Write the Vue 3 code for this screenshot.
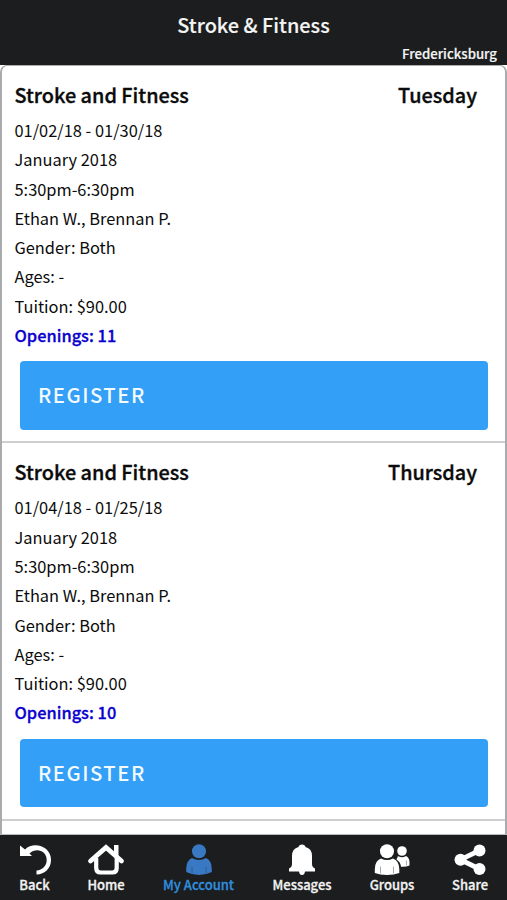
<script setup>
const classes = [
  { name: 'Stroke and Fitness', day: 'Tuesday', dates: '01/02/18 - 01/30/18', openings: 11 },
  { name: 'Stroke and Fitness', day: 'Thursday', dates: '01/04/18 - 01/25/18', openings: 10 },
]
</script>

<template>
  <div class="screen">
    <header class="top">
      <h1>Stroke &amp; Fitness</h1>
      <div class="location">Fredericksburg</div>
    </header>
    <main class="list-wrap">
      <div class="list">
        <section v-for="c in classes" :key="c.day" class="card">
          <div class="title">
            <h2>{{ c.name }}</h2>
            <h2 class="day">{{ c.day }}</h2>
          </div>
          <ul class="details">
            <li class="dates">{{ c.dates }}</li>
            <li>January 2018</li>
            <li>5:30pm-6:30pm</li>
            <li>Ethan W., Brennan P.</li>
            <li>Gender: Both</li>
            <li>Ages: -</li>
            <li>Tuition: $90.00</li>
            <li class="openings">Openings: {{ c.openings }}</li>
          </ul>
          <button class="register">REGISTER</button>
        </section>
      </div>
    </main>
    <nav class="tabs">
      <a class="tab back">
        <svg width="34" height="34" viewBox="0 0 34 34">
          <path d="M7 7.500C15.500 -1 33 4 33 18C33 26 27 32.500 18.500 32.500V28.500C24.500 28 28.700 24 28.700 18C28.700 9 18.500 5 11.500 11.500L14 14H2V3.500Z" fill="#fff" />
        </svg>
        <span>Back</span>
      </a>
      <a class="tab home">
        <svg width="38" height="34" viewBox="0 0 38 34">
          <path d="M3.500 19L19 5.500L34.500 19" fill="none" stroke="#fff" stroke-width="4.800" stroke-linecap="round" />
          <path d="M9.200 16V26Q9.200 30.500 13.500 30.500H25.500Q29.700 30.500 29.700 26V16" fill="none" stroke="#fff" stroke-width="4.200" />
          <path d="M27 3H31.500V15L27 11Z" fill="#fff" />
        </svg>
        <span>Home</span>
      </a>
      <a class="tab account">
        <svg width="34" height="34" viewBox="0 0 34 34">
          <g fill="#3978c3">
            <circle cx="17" cy="9.200" r="7" />
            <path d="M10 16Q17 20 24 16Q29.500 18 29.800 27V30Q24 33 17 33T4.200 30V27Q4.500 18 10 16Z" />
          </g>
          <path d="M10 25V31.500M24 25V31.500" stroke="#2d5a92" />
        </svg>
        <span>My Account</span>
      </a>
      <a class="tab messages">
        <svg width="34" height="34" viewBox="0 0 34 34">
          <path d="M17 2.500Q20 2.500 20.500 5Q27 6.500 27 14V22Q27 25 30 26.500V29.500H20Q19.500 33 17 33T14 29.500H4V26.500Q7 25 7 22V14Q7 6.500 13.500 5Q14 2.500 17 2.500Z" fill="#fff" />
        </svg>
        <span>Messages</span>
      </a>
      <a class="tab groups">
        <svg width="38" height="34" viewBox="0 0 38 34">
          <g fill="#fff">
            <circle cx="29" cy="9" r="4.800" />
            <path d="M25 14Q29 16.500 33 14Q36.500 15.500 36.500 20.500V23.500Q33 25 28 24.700Q27.500 20 23.500 17.500Z" />
            <circle cx="14" cy="9.300" r="7" />
            <path d="M8 16.500Q14 19.500 20 16.500Q26 18.500 26.300 27V31Q21 33 14 33T1.800 31V27Q2 18.500 8 16.500Z" />
          </g>
          <path d="M7.500 24.500V31.500M20.500 24.500V31.500M33.500 18.500V23.500" stroke="#aaa" />
        </svg>
        <span>Groups</span>
      </a>
      <a class="tab share">
        <svg width="34" height="34" viewBox="0 0 34 34">
          <path d="M26.500 8.500L7.500 17.700L26.500 27" fill="none" stroke="#fff" stroke-width="4.800" />
          <g fill="#fff">
            <circle cx="26.500" cy="8.500" r="6" />
            <circle cx="7.500" cy="17.700" r="6" />
            <circle cx="26.500" cy="27" r="6" />
          </g>
        </svg>
        <span>Share</span>
      </a>
    </nav>
  </div>
</template>

<style>
body {
  background: #1b1d1e;
}
</style>

<style scoped>
.screen {
  display: flex;
  flex-direction: column;
  height: 900px;
  overflow: hidden;
  font-family: "Noto Sans CJK SC", "Noto Sans", sans-serif;
  color: #0b0b0b;
}
.top {
  flex: none;
  height: 65px;
  background: #1b1d1e;
  color: #f4f4f4;
}
h1 {
  margin: 0;
  padding-top: 9px;
  font-size: 19.9px;
  line-height: 32px;
  font-weight: 500;
  text-align: center;
  -webkit-text-stroke: 0.15px;
}
.location {
  padding: 1px 10px 0 0;
  font-size: 13.2px;
  line-height: 24px;
  font-weight: 500;
  text-align: right;
  -webkit-text-stroke: 0.2px;
}
.list-wrap {
  flex: 1;
  min-height: 0;
  overflow: hidden;
  background: #fff;
}
.list {
  box-sizing: border-box;
  height: 800px;
  border: 1px solid #a9abac;
  border-left-width: 2px;
  border-right-width: 2px;
  border-radius: 7px;
}
.card {
  box-sizing: border-box;
  height: 377.4px;
  padding: 13px 17px 12px 12.5px;
  border-bottom: 2px solid #cfcfcf;
}
.title {
  display: flex;
  justify-content: space-between;
  padding-right: 11px;
}
h2 {
  margin: 0;
  font-size: 19.85px;
  line-height: 32px;
  font-weight: 500;
  -webkit-text-stroke: 0.35px;
}
.details {
  margin: 0;
  padding: 5px 0 0;
  list-style: none;
  font-size: 16.4px;
  line-height: 29.3px;
}
.openings {
  color: #0a00cf;
  font-weight: 500;
  -webkit-text-stroke: 0.3px;
}
.register {
  display: block;
  width: 468px;
  height: 68.5px;
  margin: 11px 0 0 5.5px;
  padding: 0 18px 3px;
  border: 0;
  border-radius: 4px;
  background: #339ff7;
  color: #f4fbff;
  font: 500 20.3px "Noto Sans CJK SC", sans-serif;
  letter-spacing: 1.5px;
  text-align: left;
}
.tabs {
  flex: none;
  display: grid;
  grid-template-columns: 69px 74px 111px 96px 84px 72px;
  box-sizing: border-box;
  height: 65px;
  background: #1b1d1e;
  color: #f2f2f2;
  box-shadow: 0 -1px 0 #b9babb;
}
.tab {
  display: flex;
  flex-direction: column;
  align-items: center;
  padding-top: 7px;
}
.tab svg {
  flex: none;
}
.tab span {
  font-size: 13px;
  line-height: 18px;
  font-weight: 500;
  white-space: nowrap;
  -webkit-text-stroke: 0.3px;
}
.account {
  color: #318ddd;
}
</style>
